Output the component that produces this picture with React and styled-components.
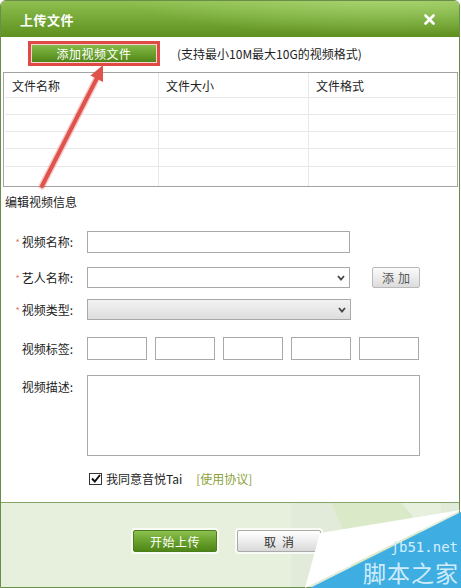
import React from "react";
import styled, { createGlobalStyle } from "styled-components";

const Global = createGlobalStyle`
  html, body { margin: 0; padding: 0; background: #fff; }
  body { font-family: "Noto Sans CJK SC", "Noto Sans", sans-serif; font-size: 12px; color: #333; }
  * { box-sizing: border-box; }
`;

const Page = styled.div`
  position: relative;
  width: 461px;
  height: 588px;
  overflow: hidden;
`;

const Window = styled.div`
  width: 460px;
  height: 588px;
  border: 1px solid #6b8d4a;
  border-radius: 6px 6px 0 0;
  display: flex;
  flex-direction: column;
  background: #fff;
  overflow: hidden;
`;

const TitleBar = styled.div`
  height: 36px;
  flex: none;
  display: flex;
  align-items: center;
  justify-content: space-between;
  padding: 0 24px 0 19px;
  background:
    radial-gradient(ellipse 260px 40px at 380px -6px, rgba(190, 230, 140, 0.55), rgba(190, 230, 140, 0) 100%),
    linear-gradient(to bottom, #8fbf50 0%, #77aa38 45%, #5f901f 100%);
`;

const Title = styled.div`
  color: #fff;
  font-weight: bold;
  font-size: 13px;
  letter-spacing: 0.5px;
`;

const Close = styled.svg`
  width: 11px;
  height: 11px;
  display: block;
`;

const Body = styled.div`
  flex: 1;
  display: flex;
  flex-direction: column;
`;

const Toolbar = styled.div`
  display: flex;
  align-items: center;
  margin: 4px 0 0 27px;
  height: 25px;
`;

const Highlight = styled.div`
  width: 132px;
  height: 25px;
  border: 3px solid #df4a45;
  padding: 1px;
  background: #f4d6d4;
`;

const AddButton = styled.div`
  height: 100%;
  display: flex;
  align-items: center;
  justify-content: center;
  color: #fff;
  font-size: 12px;
  letter-spacing: 0.5px;
  background: linear-gradient(to bottom, #86b94a 0%, #6aa22d 50%, #4f8518 100%);
`;

const Hint = styled.div`
  margin-left: 17px;
  font-size: 12px;
  color: #222;
`;

const FileTable = styled.div`
  margin: 6px 1px 0 2px;
  height: 115px;
  border: 1px solid #a3a3a3;
  display: grid;
  grid-template-columns: 153px 150px 1fr;
  grid-template-rows: 25px 17px 17px 17px 18px 1fr;
  padding: 0 1px;
`;

const Cell = styled.div`
  display: flex;
  align-items: center;
  padding-left: 7px;
  font-size: 12px;
  color: #222;
  border-left: ${(p) => (p.$first ? "none" : "1px solid #e8e8e8")};
  border-bottom: ${(p) => (p.$last ? "none" : "1px solid #e8e8e8")};
`;

const SectionTitle = styled.div`
  margin: 6px 0 0 4px;
  font-size: 12px;
  color: #222;
  line-height: 17px;
`;

const Row = styled.div`
  display: flex;
  align-items: ${(p) => (p.$top ? "flex-start" : "center")};
  margin-top: ${(p) => p.$mt}px;
`;

const Label = styled.div`
  width: 86px;
  flex: none;
  padding-right: 14px;
  text-align: right;
  font-size: 12px;
  color: #222;
  line-height: 17px;
  padding-top: ${(p) => (p.$top ? 3 : 0)}px;
`;

const Star = styled.span`
  color: #e07a5a;
  font-size: 9px;
  margin-right: 2px;
  vertical-align: 1px;
`;

const TextBox = styled.div`
  width: ${(p) => p.$w}px;
  height: ${(p) => p.$h}px;
  border: 1px solid #a9a9a9;
  background: #fff;
  flex: none;
`;

const Select = styled.div`
  width: ${(p) => p.$w}px;
  height: ${(p) => p.$h}px;
  border: 1px solid #a9a9a9;
  background: ${(p) => (p.$grey ? "linear-gradient(to bottom, #f2f2f2, #dedede)" : "#fff")};
  display: flex;
  align-items: center;
  justify-content: flex-end;
  padding-right: 4px;
  flex: none;
`;

const Chevron = styled.svg`
  width: 8px;
  height: 6px;
  display: block;
`;

const SmallButton = styled.div`
  margin-left: 22px;
  width: 48px;
  height: 21px;
  border: 1px solid #b9b9b9;
  border-radius: 2px;
  background: linear-gradient(to bottom, #fbfbfb, #dcdcdc);
  display: flex;
  align-items: center;
  justify-content: center;
  color: #555;
  font-size: 12px;
  letter-spacing: 4px;
  padding-left: 4px;
`;

const TagRow = styled.div`
  display: flex;
  gap: 8px;
`;

const AgreeRow = styled.div`
  display: flex;
  align-items: center;
  margin: 14px 0 0 88px;
  font-size: 12px;
  color: #222;
`;

const CheckBox = styled.div`
  width: 13px;
  height: 12px;
  border: 1px solid #333;
  display: flex;
  align-items: center;
  justify-content: center;
  margin-right: 4px;
  background: #fff;
`;

const Link = styled.span`
  color: #8a9f3a;
  margin-left: 14px;
`;

const Footer = styled.div`
  position: relative;
  height: 85px;
  flex: none;
  border-top: 1px solid #84a468;
  background: #e6f0dc;
  display: flex;
  align-items: flex-start;
  padding: 27px 0 0 132px;
  gap: 20px;
  overflow: hidden;
`;

const Deco = styled.svg`
  position: absolute;
  left: 0;
  top: 0;
  width: 460px;
  height: 85px;
`;

const FooterButton = styled.div`
  position: relative;
  width: 84px;
  height: 22px;
  border-radius: 2px;
  display: flex;
  align-items: center;
  justify-content: center;
  font-size: 12px;
  box-shadow: 0 0 0 2px rgba(255, 255, 255, 0.75);
  color: ${(p) => (p.$primary ? "#fff" : "#333")};
  letter-spacing: ${(p) => (p.$primary ? "0.5px" : "6px")};
  padding-left: ${(p) => (p.$primary ? 0 : 6)}px;
  border: 1px solid ${(p) => (p.$primary ? "#4c7f1c" : "#aaa")};
  background: ${(p) =>
    p.$primary
      ? "linear-gradient(to bottom, #8cc050 0%, #6aa22d 50%, #4e8618 100%)"
      : "linear-gradient(to bottom, #ffffff 0%, #eeeeee 50%, #d8d8d8 100%)"};
`;

const Overlay = styled.svg`
  position: absolute;
  left: 0;
  top: 0;
  width: 461px;
  height: 588px;
  pointer-events: none;
`;

const Watermark = styled.div`
  position: absolute;
  right: 0;
  bottom: 0;
  width: 160px;
  height: 80px;
`;

const WmShape = styled.svg`
  position: absolute;
  left: 0;
  top: 0;
  width: 160px;
  height: 80px;
`;

const WmSite = styled.div`
  position: absolute;
  right: 3px;
  top: 31px;
  font-family: "DejaVu Sans Mono", monospace;
  font-size: 14px;
  line-height: 16px;
  color: #d6efff;
`;

const WmName = styled.div`
  position: absolute;
  right: 2px;
  top: 51px;
  font-size: 23px;
  line-height: 27px;
  color: #d0ecfb;
  letter-spacing: 1px;
`;

const ChevronIcon = () => (
  <Chevron viewBox="0 0 8 6">
    <path d="M1 1 L4 4.5 L7 1" fill="none" stroke="#444" strokeWidth="1.8" />
  </Chevron>
);

const rows = [0, 1, 2, 3, 4];

export default function App() {
  return (
    <>
      <Global />
      <Page>
        <Window>
          <TitleBar>
            <Title>上传文件</Title>
            <Close viewBox="0 0 11 11">
              <path d="M1.5 1.5 L9.5 9.5 M9.5 1.5 L1.5 9.5" stroke="#fff" strokeWidth="2.6" strokeLinecap="round" />
            </Close>
          </TitleBar>
          <Body>
            <Toolbar>
              <Highlight>
                <AddButton>添加视频文件</AddButton>
              </Highlight>
              <Hint>(支持最小10M最大10G的视频格式)</Hint>
            </Toolbar>
            <FileTable>
              <Cell $first>文件名称</Cell>
              <Cell>文件大小</Cell>
              <Cell>文件格式</Cell>
              {rows.map((r) =>
                [0, 1, 2].map((c) => (
                  <Cell key={`${r}-${c}`} $first={c === 0} $last={r === 4} />
                ))
              )}
            </FileTable>
            <SectionTitle>编辑视频信息</SectionTitle>

            <Row $mt={21}>
              <Label><Star>*</Star>视频名称:</Label>
              <TextBox $w={263} $h={22} />
            </Row>
            <Row $mt={14}>
              <Label><Star>*</Star>艺人名称:</Label>
              <Select $w={263} $h={21}><ChevronIcon /></Select>
              <SmallButton>添加</SmallButton>
            </Row>
            <Row $mt={11}>
              <Label><Star>*</Star>视频类型:</Label>
              <Select $w={264} $h={21} $grey><ChevronIcon /></Select>
            </Row>
            <Row $mt={17}>
              <Label>视频标签:</Label>
              <TagRow>
                {[0, 1, 2, 3, 4].map((i) => (
                  <TextBox key={i} $w={60} $h={23} />
                ))}
              </TagRow>
            </Row>
            <Row $mt={15} $top>
              <Label $top>视频描述:</Label>
              <TextBox $w={333} $h={81} />
            </Row>
            <AgreeRow>
              <CheckBox>
                <svg width="10" height="9" viewBox="0 0 10 9">
                  <path d="M1 4.5 L3.8 7.5 L9 1" fill="none" stroke="#111" strokeWidth="2" />
                </svg>
              </CheckBox>
              我同意音悦Tai
              <Link>[使用协议]</Link>
            </AgreeRow>
          </Body>
          <Footer>
            <Deco viewBox="0 0 460 85">
              <rect x="290" y="0" width="50" height="85" fill="#e2ebd9" />
              <path d="M330 0 Q360 60 345 85 L420 85 Q440 40 400 0 Z" fill="#dae9c8" />
              <rect x="440" y="0" width="20" height="85" fill="#e2ebd9" />
            </Deco>
            <FooterButton $primary>开始上传</FooterButton>
            <FooterButton>取消</FooterButton>
          </Footer>
        </Window>

        <Overlay viewBox="0 0 461 588">
          <line x1="42" y1="186" x2="97" y2="78" stroke="rgba(224,82,76,0.3)" strokeWidth="7" strokeLinecap="round" />
          <line x1="42" y1="186" x2="97" y2="78" stroke="#e0524c" strokeWidth="4" strokeLinecap="round" />
          <polygon points="103,65 90.5,75.5 103,82" fill="#e0524c" />
        </Overlay>

        <Watermark>
          <WmShape viewBox="0 0 160 80">
            <polygon points="19,25 160,2 4,80" fill="#ffffff" />
            <polygon points="9,80 160,4 160,80" fill="#3eaee2" />
          </WmShape>
          <WmSite>jb51.net</WmSite>
          <WmName>脚本之家</WmName>
        </Watermark>
      </Page>
    </>
  );
}
